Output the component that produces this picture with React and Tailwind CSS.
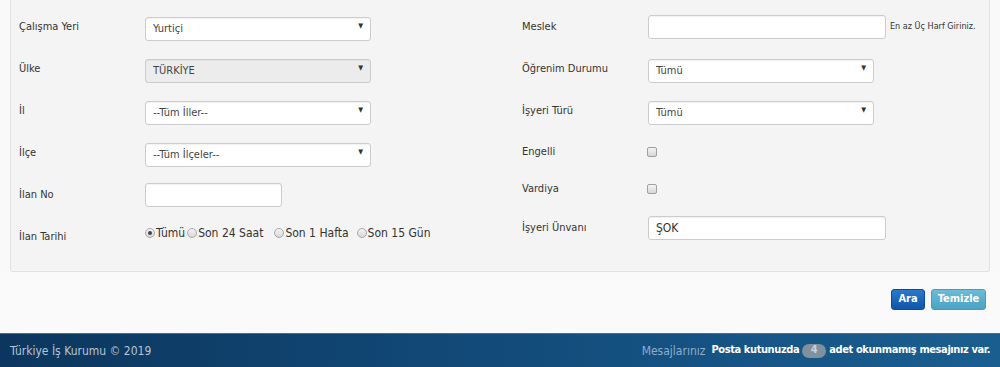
import { useState } from 'react';

const font = "font-['DejaVu_Sans_Condensed','Liberation_Sans',sans-serif]";

function Select({ value, width, disabled }) {
  return (
    <div className={`relative h-[24px] ${width}`}>
      <select
        disabled={disabled}
        defaultValue={value}
        className={`h-full w-full appearance-none rounded-[3px] border border-[#cccccc] pl-[7px] text-[11px] text-[#444] shadow-[inset_0_1px_1px_rgba(0,0,0,0.06)] outline-none ${font} ${disabled ? 'bg-[#ececec]' : 'bg-white'}`}
      >
        <option>{value}</option>
      </select>
      <span className="pointer-events-none absolute right-[8px] top-[8px] text-[7px] leading-none text-[#333]">▼</span>
    </div>
  );
}

function TextBox({ width, value = '' }) {
  return (
    <input
      type="text"
      defaultValue={value}
      className={`h-[24px] ${width} rounded-[3px] border border-[#cccccc] bg-white px-[7px] text-[12px] text-[#333] shadow-[inset_0_1px_1px_rgba(0,0,0,0.06)] outline-none ${font}`}
    />
  );
}

function Row({ label, height, children }) {
  return (
    <div className={`flex items-center ${height}`}>
      <div className="w-[126px] shrink-0 pt-[1px] text-[11px] text-[#333]">{label}</div>
      <div className="flex items-center">{children}</div>
    </div>
  );
}

function Radio({ checked, label, onClick, gap }) {
  return (
    <button type="button" onClick={onClick} className={`flex items-center text-[12px] text-[#333] ${gap}`}>
      <span className="flex h-[10px] w-[10px] items-center justify-center rounded-full border border-[#a8a8a8] bg-gradient-to-b from-[#f4f4f4] to-[#d8d8d8]">
        {checked && <span className="h-[4px] w-[4px] rounded-full bg-[#444]" />}
      </span>
      <span className="ml-[1px]">{label}</span>
    </button>
  );
}

function Check() {
  return <span className="ml-[-1px] block h-[10px] w-[10px] rounded-[2px] border border-[#a0a0a0] bg-gradient-to-b from-[#f4f4f4] to-[#d6d6d6]" />;
}

export default function App() {
  const [period, setPeriod] = useState('Tümü');
  const periods = [
    ['Tümü', 'mr-[2px]'],
    ['Son 24 Saat', 'mr-[11px]'],
    ['Son 1 Hafta', 'mr-[8px]'],
    ['Son 15 Gün', ''],
  ];

  return (
    <div className={`flex h-[367px] w-[1000px] flex-col bg-[#f9f9f9] ${font}`}>
      <div className="mx-[10px] flex h-[272px] shrink-0 rounded-b-[3px] border border-t-0 border-[#e2e2e2] bg-[#f4f4f4] pl-[8px]">
        <div className="flex w-[503px] flex-col pt-[6px]">
          <Row label="Çalışma Yeri" height="h-[42px]">
            <Select value="Yurtiçi" width="w-[226px]" />
          </Row>
          <Row label="Ülke" height="h-[42px]">
            <Select value="TÜRKİYE" width="w-[226px]" disabled />
          </Row>
          <Row label="İl" height="h-[42px]">
            <Select value="--Tüm İller--" width="w-[226px]" />
          </Row>
          <Row label="İlçe" height="h-[42px]">
            <Select value="--Tüm İlçeler--" width="w-[226px]" />
          </Row>
          <Row label="İlan No" height="h-[42px]">
            <TextBox width="w-[137px]" />
          </Row>
          <Row label="İlan Tarihi" height="h-[42px]">
            <div className="mb-[8px] flex items-center">
              {periods.map(([p, gap]) => (
                <Radio key={p} label={p} gap={gap} checked={period === p} onClick={() => setPeriod(p)} />
              ))}
            </div>
          </Row>
        </div>

        <div className="flex flex-col pt-[6px]">
          <Row label="Meslek" height="h-[42px]">
            <TextBox width="w-[238px]" />
            <span className="ml-[4px] text-[9px] text-[#333]">En az Üç Harf Giriniz.</span>
          </Row>
          <Row label="Öğrenim Durumu" height="h-[42px]">
            <Select value="Tümü" width="w-[226px]" />
          </Row>
          <Row label="İşyeri Türü" height="h-[42px]">
            <Select value="Tümü" width="w-[226px]" />
          </Row>
          <Row label="Engelli" height="h-[40px]">
            <Check />
          </Row>
          <Row label="Vardiya" height="h-[34px]">
            <Check />
          </Row>
          <Row label="İşyeri Ünvanı" height="h-[44px]">
            <TextBox width="w-[238px]" value="ŞOK" />
          </Row>
        </div>
      </div>

      <div className="flex flex-1 items-start justify-end gap-[6px] bg-[#fafafa] pr-[14px] pt-[17px]">
        <button className="h-[21px] w-[34px] rounded-[3px] border border-[#0c4a9a] bg-gradient-to-b from-[#2a78cc] to-[#0f56aa] text-[11px] font-bold text-white">
          Ara
        </button>
        <button className="h-[21px] w-[55px] rounded-[3px] border border-[#4a9cba] bg-gradient-to-b from-[#6bbcd8] to-[#4aa2c4] text-[11px] font-bold text-white">
          Temizle
        </button>
      </div>

      <div className="flex h-[34px] shrink-0 items-center justify-between border-t border-[#3b72a0] bg-gradient-to-r from-[#0c365d] via-[#124b7a] to-[#1a5e90] px-[10px] text-[12px]">
        <span className="text-[#b5c5d4]">Türkiye İş Kurumu © 2019</span>
        <div className="flex items-center">
          <span className="mr-[6px] text-[#8eaecb]">Mesajlarınız</span>
          <span className="text-[11px] font-bold tracking-[-0.4px] text-white">Posta kutunuzda</span>
          <span className="mx-[3px] flex h-[14px] w-[24px] items-center justify-center rounded-full bg-[#7f909e] text-[11px] font-bold text-[#c9d1d8]">4</span>
          <span className="text-[11px] font-bold tracking-[-0.4px] text-white">adet okunmamış mesajınız var.</span>
        </div>
      </div>
    </div>
  );
}
